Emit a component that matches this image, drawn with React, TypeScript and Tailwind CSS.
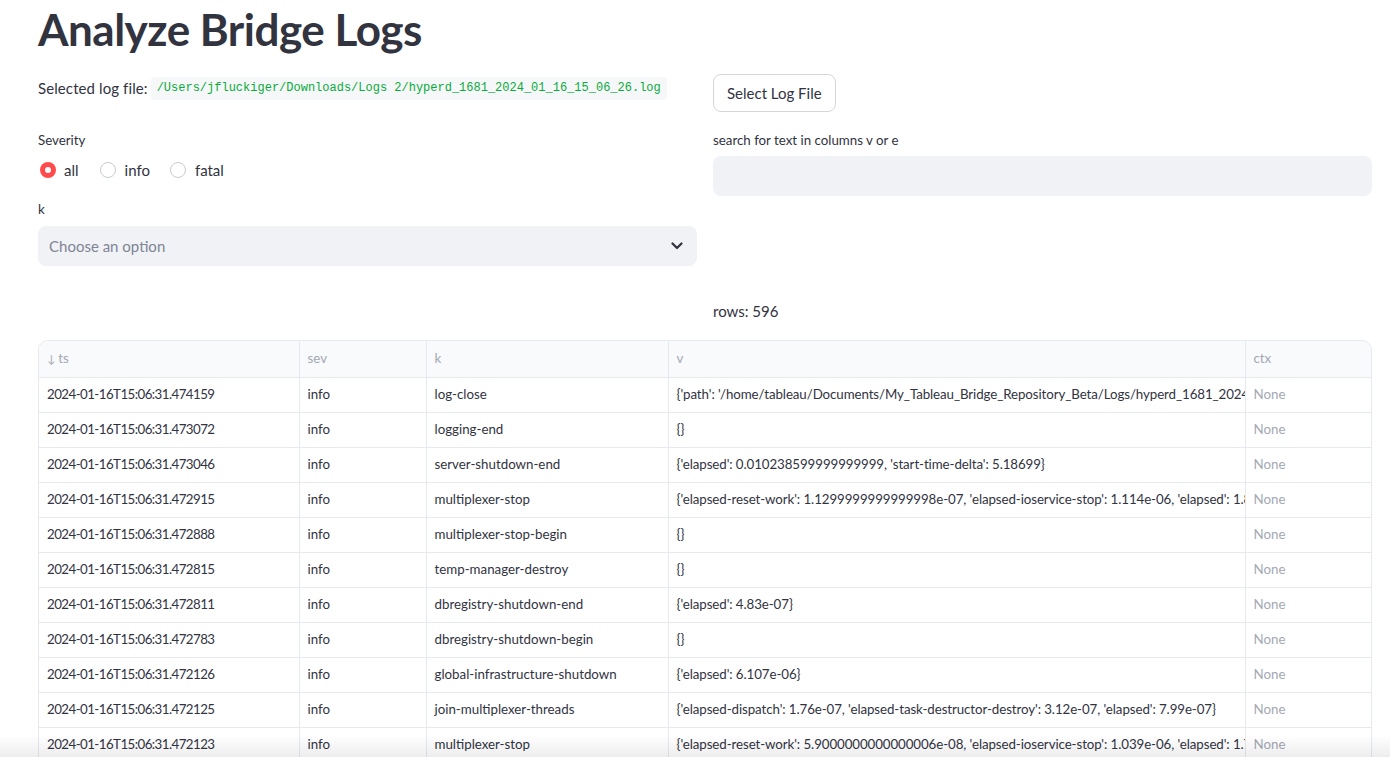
import React from "react";

const rows: [string, string, string, string][] = [
  ["2024-01-16T15:06:31.474159", "info", "log-close", "{'path': '/home/tableau/Documents/My_Tableau_Bridge_Repository_Beta/Logs/hyperd_1681_2024_01_16_15_06_26.log'}"],
  ["2024-01-16T15:06:31.473072", "info", "logging-end", "{}"],
  ["2024-01-16T15:06:31.473046", "info", "server-shutdown-end", "{'elapsed': 0.010238599999999999, 'start-time-delta': 5.18699}"],
  ["2024-01-16T15:06:31.472915", "info", "multiplexer-stop", "{'elapsed-reset-work': 1.1299999999999998e-07, 'elapsed-ioservice-stop': 1.114e-06, 'elapsed': 1.832e-06}"],
  ["2024-01-16T15:06:31.472888", "info", "multiplexer-stop-begin", "{}"],
  ["2024-01-16T15:06:31.472815", "info", "temp-manager-destroy", "{}"],
  ["2024-01-16T15:06:31.472811", "info", "dbregistry-shutdown-end", "{'elapsed': 4.83e-07}"],
  ["2024-01-16T15:06:31.472783", "info", "dbregistry-shutdown-begin", "{}"],
  ["2024-01-16T15:06:31.472126", "info", "global-infrastructure-shutdown", "{'elapsed': 6.107e-06}"],
  ["2024-01-16T15:06:31.472125", "info", "join-multiplexer-threads", "{'elapsed-dispatch': 1.76e-07, 'elapsed-task-destructor-destroy': 3.12e-07, 'elapsed': 7.99e-07}"],
  ["2024-01-16T15:06:31.472123", "info", "multiplexer-stop", "{'elapsed-reset-work': 5.9000000000000006e-08, 'elapsed-ioservice-stop': 1.039e-06, 'elapsed': 1.737e-06}"],
  ["2024-01-16T15:06:31.472101", "info", "multiplexer-stop-begin", "{}"],
];

const body = { fontFamily: "Lato, 'Noto Sans', sans-serif" };

const cell = "pl-[8px] border-r border-b border-[#e6e9ef] whitespace-nowrap overflow-hidden";

export default function App() {
  return (
    <div className="h-screen overflow-hidden bg-white text-[#31333F]" style={body}>
      <div className="pl-[38px] pr-[18px] pt-[3px]">
        <h1 className="text-[44px] font-bold leading-[52px] tracking-[-0.5px]">Analyze Bridge Logs</h1>

        <div className="mt-[19px] grid grid-cols-2 gap-[16px]">
          <div>
            <div className="flex items-center h-[28px] whitespace-nowrap">
              <span className="text-[15px] mr-[3px] tracking-[0.1px]">Selected log file:</span>
              <code
                className="bg-[#f6f7f9] text-[#09ab3b] text-[12px] leading-[17px] px-[6px] py-[3px] rounded-[4px]"
                style={{ fontFamily: "'Liberation Mono', monospace" }}
              >
                /Users/jfluckiger/Downloads/Logs 2/hyperd_1681_2024_01_16_15_06_26.log
              </code>
            </div>
            <div className="mt-[28px] text-[13.3px] leading-[20px]">Severity</div>
            <div className="mt-[10px] flex items-center h-[20px] text-[15px]">
              <span className="flex items-center mr-[21px]">
                <span className="w-[16px] h-[16px] rounded-full bg-[#ff4b4b] flex items-center justify-center mr-[8px] ml-[2px]">
                  <span className="w-[6px] h-[6px] rounded-full bg-white" />
                </span>
                all
              </span>
              <span className="flex items-center mr-[20px]">
                <span className="w-[16px] h-[16px] rounded-full border border-[#c9cbd1] mr-[9px]" />
                info
              </span>
              <span className="flex items-center">
                <span className="w-[16px] h-[16px] rounded-full border border-[#c9cbd1] mr-[9px]" />
                fatal
              </span>
            </div>
            <div className="mt-[19px] text-[13.3px] leading-[20px]">k</div>
            <div className="mt-[7px] h-[40px] rounded-[8px] bg-[#f0f2f6] flex items-center justify-between pl-[11px] pr-[14px]">
              <span className="text-[15px] text-[#808495]">Choose an option</span>
              <svg width="12" height="8" viewBox="0 0 12 8" fill="none">
                <path d="M1.5 1.5 L6 6 L10.5 1.5" stroke="#31333F" strokeWidth="2.2" strokeLinecap="round" strokeLinejoin="round" />
              </svg>
            </div>
          </div>
          <div>
            <button className="h-[38px] px-[13px] rounded-[8px] border border-[#d5d6da] bg-white text-[15px]">
              Select Log File
            </button>
            <div className="mt-[18px] text-[13.3px] leading-[20px]">search for text in columns v or e</div>
            <div className="mt-[6px] h-[40px] rounded-[8px] bg-[#f0f2f6]" />
          </div>
        </div>

        <div className="mt-[33px] grid grid-cols-2 gap-[16px]">
          <div />
          <div className="text-[15px] leading-[24px]">rows: 596</div>
        </div>

        <div className="mt-[17px] border border-[#e6e9ef] rounded-t-[10px] overflow-hidden">
          <table className="w-full table-fixed border-collapse text-[13.3px]">
            <colgroup>
              <col style={{ width: 260 }} />
              <col style={{ width: 127 }} />
              <col style={{ width: 242 }} />
              <col style={{ width: 577 }} />
              <col />
            </colgroup>
            <thead>
              <tr className="h-[36px] bg-[#f9fafb] text-[#a3a8b4]">
                <th className={cell + " font-normal text-left"}><span className="text-[11px] mr-[3px]">↓</span>ts</th>
                <th className={cell + " font-normal text-left"}>sev</th>
                <th className={cell + " font-normal text-left"}>k</th>
                <th className={cell + " font-normal text-left"}>v</th>
                <th className="font-normal text-left pl-[8px] border-b border-[#e6e9ef]">ctx</th>
              </tr>
            </thead>
            <tbody>
              {rows.map((r, i) => (
                <tr key={i} className="h-[35px]">
                  <td className={cell + " tracking-[-0.55px]"}>{r[0]}</td>
                  <td className={cell}>{r[1]}</td>
                  <td className={cell}>{r[2]}</td>
                  <td className={cell + " tracking-[-0.08px]"}>{r[3]}</td>
                  <td className="pl-[8px] border-b border-[#e6e9ef] whitespace-nowrap overflow-hidden text-[#a3a8b4]">None</td>
                </tr>
              ))}
            </tbody>
          </table>
        </div>
      </div>
      <div className="fixed left-0 right-0 bottom-0 h-[22px] bg-gradient-to-t from-[rgba(0,0,0,0.07)] to-transparent pointer-events-none" />
    </div>
  );
}
